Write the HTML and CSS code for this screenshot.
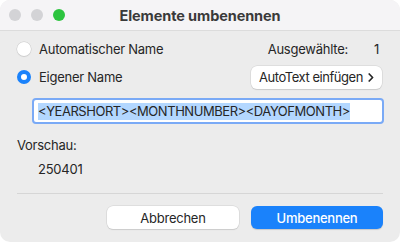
FILE: index.html
```html
<!DOCTYPE html>
<html lang="de">
<head>
    <meta charset="UTF-8">
    <meta name="viewport" content="width=device-width, initial-scale=1.0">
    <title>Elemente umbenennen</title>
    <link rel="stylesheet" href="styles.css">
</head>
<body>
    <div class="window">
        <div class="titlebar">
            <div class="lights">
                <span class="light"></span>
                <span class="light"></span>
                <span class="light green"></span>
            </div>
            <div class="title">Elemente umbenennen</div>
        </div>
        <div class="content">
            <div class="row">
                <label class="option"><span class="radio"></span>Automatischer Name</label>
                <div class="count"><span>Ausgewählte:</span><span class="num">1</span></div>
            </div>
            <div class="row">
                <label class="option"><span class="radio checked"></span>Eigener Name</label>
                <button class="btn autotext">
                    <span>AutoText einfügen</span>
                    <svg class="chev" width="6" height="9" viewBox="0 0 6 9"><path d="M1.2 1 L4.6 4.5 L1.2 8" fill="none" stroke="#262626" stroke-width="1.7" stroke-linecap="round" stroke-linejoin="round"/></svg>
                </button>
            </div>
            <div class="field"><span class="sel">&lt;YEARSHORT&gt;&lt;MONTHNUMBER&gt;&lt;DAYOFMONTH&gt;</span></div>
            <div class="preview-label">Vorschau:</div>
            <div class="preview">250401</div>
            <hr class="sep">
            <div class="actions">
                <button class="btn">Abbrechen</button>
                <button class="btn primary">Umbenennen</button>
            </div>
        </div>
    </div>
</body>
</html>
```

FILE: styles.css
```css
* {
    box-sizing: border-box;
}

body {
    margin: 0;
    background: #ffffff;
    font-family: Inter, "Noto Sans", sans-serif;
    font-size: 13px;
    letter-spacing: -0.25px;
    color: #262626;
}

.window {
    width: 400px;
    height: 242px;
    background: #ececec;
    border-radius: 10px;
    overflow: hidden;
    display: flex;
    flex-direction: column;
}

.titlebar {
    height: 31px;
    flex-shrink: 0;
    background: #f5f4f6;
    border-bottom: 1px solid #dcdcdc;
    display: flex;
    align-items: center;
    position: relative;
}

.lights {
    display: flex;
    gap: 10px;
    padding-left: 9px;
}

.light {
    width: 12px;
    height: 12px;
    border-radius: 50%;
    background: #d3d3d6;
}

.light.green {
    background: #2dc43f;
}

.title {
    position: absolute;
    left: 0;
    right: 0;
    text-align: center;
    font-weight: 700;
    font-size: 14.5px;
    letter-spacing: -0.1px;
    color: #3a3a3a;
}

.content {
    padding: 4px 17px 0 17px;
}

.row {
    display: flex;
    justify-content: space-between;
    align-items: center;
    height: 28px;
}

.option {
    display: flex;
    align-items: center;
    gap: 8px;
}

.radio {
    width: 14px;
    height: 14px;
    border-radius: 50%;
    background: #ffffff;
    box-shadow: 0 0 0 0.5px #c8c8c8, 0 1px 1px rgba(0, 0, 0, 0.1);
}

.radio.checked {
    background: #ffffff;
    border: 4px solid #1a82fb;
    box-shadow: none;
}

.count {
    display: flex;
    gap: 26px;
    padding-right: 4px;
}

.btn {
    font-family: inherit;
    font-size: 13px;
    letter-spacing: -0.25px;
    color: #262626;
    background: #ffffff;
    border: none;
    border-radius: 6px;
    box-shadow: 0 0 0 0.5px #cfcfcf, 0 1px 1px rgba(0, 0, 0, 0.15);
    height: 23px;
    padding: 0;
    white-space: nowrap;
}

.autotext {
    width: 131px;
    display: flex;
    align-items: center;
    justify-content: space-between;
    padding: 0 8px 0 8px;
    margin-right: 1px;
    letter-spacing: -0.45px;
}

.chev {
    display: block;
}

.field {
    margin: 7px 0 0 15px;
    height: 26px;
    width: 352px;
    background: #ffffff;
    border: 2px solid #7aaaf6;
    border-radius: 4px;
    display: flex;
    align-items: center;
    padding-left: 4px;
}

.sel {
    background: #b3d7ff;
    line-height: 17px;
    letter-spacing: -0.45px;
}

.preview-label {
    margin-top: 13px;
}

.preview {
    margin: 8px 0 0 21px;
}

.sep {
    border: none;
    border-top: 1px solid #d6d6d6;
    margin: 16px 0 0 0;
}

.actions {
    display: flex;
    justify-content: flex-end;
    gap: 12px;
    margin-top: 12px;
}

.actions .btn {
    width: 132px;
}

.btn.primary {
    background: #1a82fb;
    color: #ffffff;
    font-weight: 500;
    box-shadow: 0 1px 1px rgba(0, 0, 0, 0.15);
}
```
